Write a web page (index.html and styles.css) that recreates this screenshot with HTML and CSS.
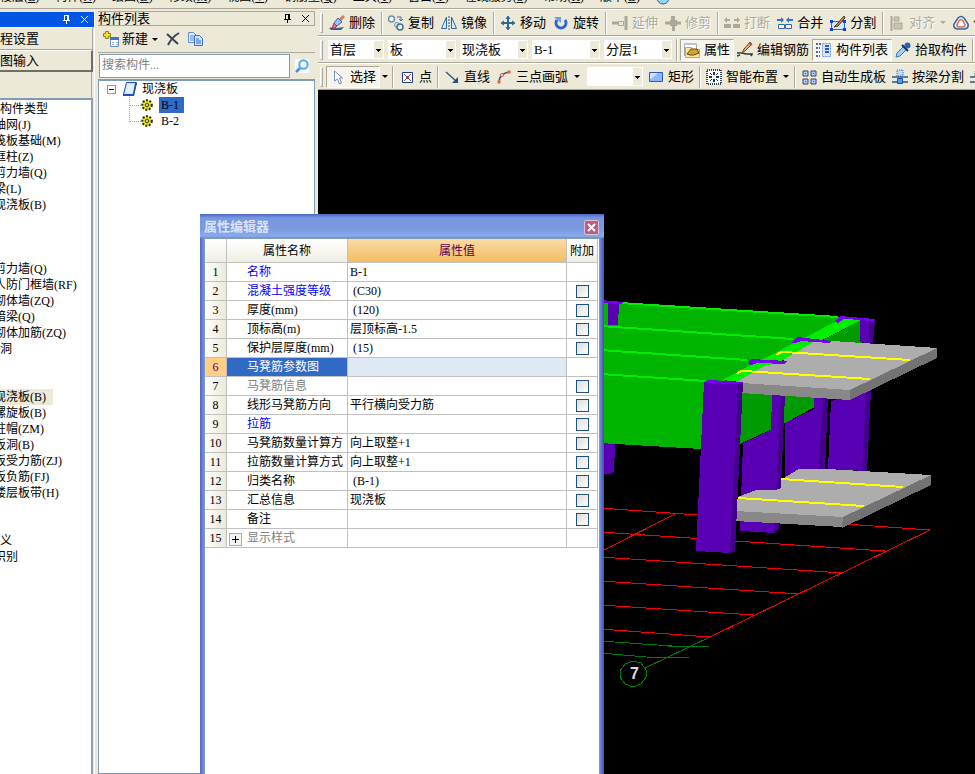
FILE: index.html
```html
<!DOCTYPE html>
<html lang="zh-CN">
<head>
<meta charset="utf-8">
<title>属性编辑器</title>
<link rel="stylesheet" href="styles.css">
</head>
<body>
<svg class="sprite" aria-hidden="true">
  <symbol id="pin" viewBox="0 0 9 9"><path d="M2.500 0v5M1 5.500h7M6 0v5M2 .5h5M4.500 5v4" fill="none" stroke="currentColor"/><path d="M5 0h2v5H5z" fill="currentColor"/></symbol>
  <symbol id="close" viewBox="0 0 9 9"><path d="M1 1l7 7M8 1L1 8" stroke="currentColor" fill="none"/></symbol>
  <symbol id="new" viewBox="0 0 16 16"><path d="M2.500.5h3v2h2v3h-2v2h-3v-2h-2v-3h2z" fill="#f3dc35" stroke="#957b12"/><path d="M7.500 6.500h8v9h-8z" fill="#fff" stroke="#6c8fc8"/><path d="M7 6h9v3H7z" fill="#3f74cd"/><path d="M9 11.500h2m2 0h2m-6 2h2m2 0h2" stroke="#8db0e8"/></symbol>
  <symbol id="x" viewBox="0 0 14 14"><path d="M1 2l11 10M13 1Q6 5 2 13" fill="none" stroke="#3c4250" stroke-width="2"/></symbol>
  <symbol id="copy" viewBox="0 0 16 14"><path d="M.5.5h5l3 3v7h-8z" fill="#dcebff" stroke="#5e8fdc"/><path d="M2 4h4M2 6h5M2 8h5" stroke="#5e8fdc"/><path d="M6.500 3.500h5l3 3v7h-8z" fill="#cfe2ff" stroke="#3b6fca"/><path d="M8 7h3M8 9h5M8 11h5" stroke="#3b6fca"/></symbol>
  <symbol id="find" viewBox="0 0 14 14"><path d="M0 0h14v14H0z" fill="#f6fbff"/><path d="M1 13l4-4" stroke="#4e95dc" stroke-width="3"/><circle cx="8.500" cy="5.500" r="4.200" fill="#e8f6ff" stroke="#5ba9e6" stroke-width="2"/></symbol>
  <symbol id="slab" viewBox="0 0 14 14"><path d="M3.500.5h10l-3 12H.5z" fill="#cfe2fb" stroke="#1c4ebc"/><path d="M4.500 2h7l-2 9h-7z" fill="#e4effd"/><path d="M12 1h2l-3 13H0v-2h10z" fill="#1c4ebc"/></symbol>
  <symbol id="gear" viewBox="0 0 12 12"><circle cx="6" cy="6" r="4.800" fill="#f6f000" stroke="#2c2900" stroke-width="2" stroke-dasharray="2 1.500"/><path d="M6 2v8M2 6h8M3 3l6 6M9 3L3 9" stroke="#8d8500" stroke-width=".6"/><circle cx="6" cy="6" r="1.500" fill="#fff" stroke="#333"/></symbol>
  <symbol id="erase" viewBox="0 0 16 16"><path d="M0 13l5-1 3 1 7-1-3 3H2z" fill="#2e5e96"/><path d="M15 1l-5 5" stroke="#c9824f" stroke-width="3"/><path d="M9 3l4 4-5 4-3-3z" fill="#9fc0f0" stroke="#3a5fae"/><path d="M5 8l3 3-2 2H3z" fill="#e56a84" stroke="#9c4862"/></symbol>
  <symbol id="dup" viewBox="0 0 16 16"><circle cx="3.500" cy="4" r="3" fill="#eef4fa" stroke="#6d8fae" stroke-width="1.500"/><path d="M9 2h4v3m-2-1l2 2 2-2" fill="none" stroke="#42719b"/><circle cx="9" cy="10" r="2.500" fill="none" stroke="#6d8fae"/><circle cx="12" cy="12" r="3" fill="#fff" fill-opacity=".6" stroke="#42719b" stroke-width="1.500"/></symbol>
  <symbol id="mirror" viewBox="0 0 16 16"><path d="M5.500 2v11.500H.5zM10.500 2v11.500h5z" fill="#d9ecf8" stroke="#2c68a0"/><path d="M8 1v14" stroke="#22538a" stroke-dasharray="2 1"/></symbol>
  <symbol id="move" viewBox="0 0 16 16"><path d="M8 2v12M2 8h12" stroke="#2f6799" stroke-width="2"/><path d="M6 4l2-3 2 3M6 12l2 3 2-3M4 6L1 8l3 2M12 6l3 2-3 2" fill="#2f6799" stroke="#2f6799"/></symbol>
  <symbol id="rotate" viewBox="0 0 16 16"><path d="M4 5a5 5 0 1 0 8 0" fill="none" stroke="#3067c9" stroke-width="3"/><path d="M1 2h7v6z" fill="#62a0ee"/></symbol>
  <symbol id="extend" viewBox="0 0 16 16"><path d="M0 8h6M14 1v14" stroke="#aca899" stroke-width="3"/><path d="M6.500 6.500h5v4h-5z" fill="none" stroke="#aca899"/></symbol>
  <symbol id="trim" viewBox="0 0 16 16"><path d="M0 8h16" stroke="#aca899" stroke-width="3"/><path d="M6 1h4v4h2v6h-2v5H7v-5H5V5h1z" fill="#aca899"/></symbol>
  <symbol id="break" viewBox="0 0 16 16"><path d="M0 9h7v4H0zM9 9h7v4H9z" fill="#aca899"/><path d="M1 5h5M10 5h5" stroke="#aca899" stroke-width="2"/><path d="M3 2v6L0 5zM13 2v6l3-3z" fill="#aca899"/></symbol>
  <symbol id="merge" viewBox="0 0 16 16"><path d="M1.500 9.500h6v4h-6zm7 0h6v4h-6z" fill="#eef5ff" stroke="#3d689f"/><path d="M0 5h5M16 5h-5" stroke="#3074c8" stroke-width="2"/><path d="M4 2l3 3-3 3zM12 2L9 5l3 3z" fill="#3074c8"/></symbol>
  <symbol id="split" viewBox="0 0 16 16"><path d="M1.500 6.500h13v8h-13z" fill="#cde9ff" stroke="#1a6fe0"/><path d="M0 5h3v3H0zM13 5h3v3h-3zM0 13h3v3H0zM13 13h3v3h-3z" fill="#1a3fe0"/><path d="M4 12l3-3 7-8 1 2-7 8z" fill="#d98b37" stroke="#553314"/></symbol>
  <symbol id="align" viewBox="0 0 16 16"><path d="M2.500 1v15" stroke="#aca899" stroke-width="2"/><path d="M5 2h5v4H5zM5 8h8v6H5z" fill="#c9c5b5" stroke="#aca899"/></symbol>
  <symbol id="offset" viewBox="0 0 16 16"><path d="M5 3Q8 0 11 3l4 6q1 4-3 5H4q-4-1-3-5z" fill="#eef" stroke="#31659b" stroke-width="1.500"/><path d="M6 6q2-3 4 0l2 4q0 2-2 2H6q-2 0-2-2z" fill="#fff" stroke="#df6a54" stroke-width="1.500"/></symbol>
  <symbol id="props" viewBox="0 0 16 16"><path d="M.5 1.500h12v12H.5z" fill="#fff" stroke="#9aa6b7"/><path d="M0 1h13v2H0z" fill="#b8c5d8"/><path d="M1.500 5.500h6l1 2h7v8h-14z" fill="#ffe397" stroke="#f09a2b"/><path d="M3 12l4-5h6l2 4-5 2H6z" fill="#d2a636" stroke="#6c4713"/></symbol>
  <symbol id="bar" viewBox="0 0 16 16"><path d="M0 11h5l4 1h7M3 13l-3 1M13 12l2 2" fill="none" stroke="#2d3d46" stroke-width="1.500"/><path d="M5 11l2-4 6-7 2 2-7 7z" fill="#deb076" stroke="#65482d"/><path d="M12 1l3 2" stroke="#d34f43" stroke-width="2"/></symbol>
  <symbol id="list" viewBox="0 0 16 16"><path d="M0 2h5M0 6h4M0 10h4M0 14h4" stroke="#52698c" stroke-width="2" stroke-dasharray="2 1"/><path d="M6.500 1.500h8v13h-8z" fill="#d6e6ff" stroke="#6b92da" stroke-dasharray="2 1"/><path d="M9 4h4M9 7h4M9 10h4" stroke="#255ac0" stroke-width="2"/></symbol>
  <symbol id="pick" viewBox="0 0 16 16"><path d="M1 15l1-4 7-7 3 3-7 7z" fill="#9fd0f5" stroke="#2877bb"/><path d="M7 3l6 6" stroke="#132e62" stroke-width="2"/><circle cx="12.500" cy="3.500" r="3" fill="#2f5fae"/></symbol>
  <symbol id="cursor" viewBox="0 0 16 16"><path d="M4.500 2v10l3-2 2 5 2-1-2-5h3z" fill="#fff" stroke="#6e8fb6"/></symbol>
  <symbol id="point" viewBox="0 0 16 16"><path d="M3.500 3.500h10v10h-10z" fill="#fff" stroke="#243c79"/><path d="M5 5l7 7M12 5l-7 7" stroke="#4063a8"/><circle cx="8.500" cy="8.500" r="1.500" fill="#e22"/></symbol>
  <symbol id="line" viewBox="0 0 16 16"><path d="M2 3l10 9" stroke="#2e5b93" stroke-width="1.500"/><path d="M14 8v6H8z" fill="#244e87"/></symbol>
  <symbol id="arc" viewBox="0 0 16 16"><path d="M3 14Q3 4 14 3" fill="none" stroke="#345678" stroke-width="1.500"/><circle cx="3" cy="13" r="1.800" fill="#e4684a"/><circle cx="6" cy="6" r="1.500" fill="#fff" stroke="#d94d31"/><circle cx="13" cy="3" r="1.800" fill="#e4684a"/></symbol>
  <symbol id="rect" viewBox="0 0 16 16"><path d="M1.500 3.500h13v9h-13z" fill="#8db7ff" stroke="#2b59b9"/><path d="M2 4h8l-7 6H2z" fill="#cfe1ff"/></symbol>
  <symbol id="smart" viewBox="0 0 16 16"><path d="M1 1h14v14H1z" fill="#fff" stroke="#35445f" stroke-width="2" stroke-dasharray="1 1"/><path d="M8 3v3M8 10v3M3 8h3M10 8h3" stroke="#17305f" stroke-width="2"/><path d="M4 4l2 2M12 4l-2 2M4 12l2-2M12 12l-2-2" stroke="#17305f"/></symbol>
  <symbol id="auto" viewBox="0 0 16 16"><path d="M2 2h5v5H2zM10 2h5v5h-5zM2 10h5v5H2zM10 10h5v5h-5z" fill="#aecbff" stroke="#39465c"/><path d="M4 4h1v1H4zM12 4h1v1h-1zM4 12h1v1H4zM12 12h1v1h-1z" fill="#2b5fc4"/></symbol>
  <symbol id="beam" viewBox="0 0 16 16"><path d="M0 8h16M0 13h16" stroke="#2b5691" stroke-width="1.500"/><path d="M5.500 9.500h5v5h-5z" fill="#4c9cf0" stroke="#1b4f9b"/><path d="M5 1h6v6H5z" fill="#b9dcff" stroke="#2f6bb1" stroke-dasharray="1 1"/></symbol>
  <symbol id="globe" viewBox="0 0 14 14"><circle cx="7" cy="7" r="6" fill="#9bd1f3" stroke="#25619d"/><path d="M2 5q6 6 10-1" fill="none" stroke="#1c4d82" stroke-width="2"/></symbol>
</svg>

<nav class="menu">
  <span>楼层(<u>L</u>)</span><span>构件(<u>N</u>)</span><span>绘图(<u>D</u>)</span><span>修改(<u>M</u>)</span><span>视图(<u>V</u>)</span><span>钢筋量(<u>Q</u>)</span><span>工具(<u>T</u>)</span><span>窗口(<u>Y</u>)</span><span>在线服务(<u>S</u>)</span><span>帮助(<u>H</u>)</span><span>版本(<u>B</u>)</span>
  <svg class="menu-icon"><use href="#globe"/></svg>
</nav>

<div class="shell">
  <aside class="navigator">
    <header class="nav-head"><svg class="i9"><use href="#pin"/></svg><svg class="i9"><use href="#close"/></svg></header>
    <button class="nav-btn">程设置</button>
    <button class="nav-btn sunk">图输入</button>
    <div class="nav-tools"></div>
    <div class="nav-tree">
      <ul>
        <li class="top">构件类型</li>
        <li>轴网(J)</li><li>筏板基础(M)</li><li>框柱(Z)</li><li>剪力墙(Q)</li><li>梁(L)</li><li>现浇板(B)</li>
      </ul>
      <ul class="group-wall">
        <li>剪力墙(Q)</li><li>人防门框墙(RF)</li><li>砌体墙(ZQ)</li><li>暗梁(Q)</li><li>砌体加筋(ZQ)</li><li class="top">洞</li>
      </ul>
      <ul class="group-slab">
        <li><span class="current">现浇板(B)</span></li><li>螺旋板(B)</li><li>柱帽(ZM)</li><li>板洞(B)</li><li>板受力筋(ZJ)</li><li>板负筋(FJ)</li><li>楼层板带(H)</li>
      </ul>
      <ul class="group-slab">
        <li class="top">义</li><li>识别</li>
      </ul>
    </div>
  </aside>

  <aside class="components">
    <header class="comp-head"><h2>构件列表</h2><svg class="i9"><use href="#pin"/></svg><svg class="i9"><use href="#close"/></svg></header>
    <div class="comp-tools">
      <button><svg class="i16"><use href="#new"/></svg>新建<i class="arrow"></i></button>
      <button aria-label="删除"><svg class="i14"><use href="#x"/></svg></button>
      <button aria-label="复制"><svg class="i16"><use href="#copy"/></svg></button>
    </div>
    <div class="search">
      <input type="text" placeholder="搜索构件..." aria-label="搜索构件">
      <button aria-label="搜索"><svg class="i14"><use href="#find"/></svg></button>
    </div>
    <div class="comp-tree">
      <div class="root"><i class="minus"></i><svg class="i14"><use href="#slab"/></svg>现浇板</div>
      <ul>
        <li><svg class="i12"><use href="#gear"/></svg><span class="picked">B-1</span></li>
        <li><svg class="i12"><use href="#gear"/></svg><span>B-2</span></li>
      </ul>
    </div>
  </aside>

  <main>
    <div class="bar edit">
      <i class="grip"></i>
      <button class="t"><svg><use href="#erase"/></svg>删除</button><i class="sep"></i>
      <button class="t"><svg><use href="#dup"/></svg>复制</button>
      <button class="t"><svg><use href="#mirror"/></svg>镜像</button><i class="sep"></i>
      <button class="t"><svg><use href="#move"/></svg>移动</button>
      <button class="t"><svg><use href="#rotate"/></svg>旋转</button><i class="sep"></i>
      <button class="t" disabled><svg><use href="#extend"/></svg>延伸</button>
      <button class="t" disabled><svg><use href="#trim"/></svg>修剪</button><i class="sep"></i>
      <button class="t" disabled><svg><use href="#break"/></svg>打断</button>
      <button class="t"><svg><use href="#merge"/></svg>合并</button>
      <button class="t"><svg><use href="#split"/></svg>分割</button><i class="sep"></i>
      <button class="t" disabled><svg><use href="#align"/></svg>对齐<i class="arrow"></i></button>
      <button class="t"><svg><use href="#offset"/></svg>偏移</button>
    </div>
    <div class="bar">
      <i class="grip"></i>
      <select class="short" aria-label="楼层"><option>首层</option></select>
      <select aria-label="构件类别"><option>板</option></select>
      <select aria-label="构件类型"><option>现浇板</option></select>
      <select aria-label="构件"><option>B-1</option></select>
      <select aria-label="分层"><option>分层1</option></select><i class="sep"></i>
      <button class="t on"><svg><use href="#props"/></svg>属性</button>
      <button class="t"><svg><use href="#bar"/></svg>编辑钢筋</button>
      <button class="t on"><svg><use href="#list"/></svg>构件列表</button>
      <button class="t"><svg><use href="#pick"/></svg>拾取构件</button><i class="sep"></i>
    </div>
    <div class="bar">
      <i class="grip"></i>
      <button class="t on"><svg><use href="#cursor"/></svg>选择</button><button class="drop" aria-label="选择方式"><i class="arrow"></i></button><i class="sep"></i>
      <button class="t"><svg><use href="#point"/></svg>点</button><i class="sep"></i>
      <button class="t"><svg><use href="#line"/></svg>直线</button>
      <button class="t arc"><svg><use href="#arc"/></svg>三点画弧<i class="arrow"></i></button>
      <select class="short" aria-label="画弧方式"><option></option></select>
      <button class="t"><svg><use href="#rect"/></svg>矩形</button><i class="sep"></i>
      <button class="t"><svg><use href="#smart"/></svg>智能布置<i class="arrow"></i></button><i class="sep"></i>
      <button class="t"><svg><use href="#auto"/></svg>自动生成板</button>
      <button class="t"><svg><use href="#beam"/></svg>按梁分割</button>
      <button class="t" aria-label="查看"><svg><use href="#beam"/></svg></button>
    </div>

    <svg class="scene" viewBox="318 90 657 684" preserveAspectRatio="xMinYMin slice" shape-rendering="crispEdges">
      <g stroke="#f00" fill="none">
        <path d="M600 508l98 7M845 524l85 6M600 532l285 19M600 557l243 16M600 581l200 13M600 605l154 10M600 629l110 8M930 530L710 637M677 513l-77 39"/>
      </g>
      <path d="M600 641l86 6M668 647l42-1M600 653l46 4 43 1M710 637l-65 31" stroke="#008000" fill="none"/>
      <path d="M600 443l15 1-1 28-5 2h-9z" fill="#5a00b4"/>
      <path d="M600 302h20l218 15 27 3-143 62-21 67-101-6z" fill="#00b400"/>
      <path d="M742 382l120-62v22l-34 58-43 23-45 21z" fill="#009b00"/>
      <path d="M620 303l218 14M600 326l193 13M600 350l147 10M600 374l105 7" stroke="#00ee00" stroke-width="2"/>
      <path d="M722 380l121-62 18 2-121 62z" fill="#00ee00"/>
      <path d="M608 303h11l-1 22h-10z" fill="#5a00b4"/><path d="M600 300l24 2-3 2-21-1z" fill="#7800f0"/>
      <path d="M860 320l15-1-2 25-13-2z" fill="#5a00b4"/><path d="M869 321l6-1-2 24h-4z" fill="#44008c"/>
      <path d="M831 401l40-12-4 82-39-2z" fill="#5a00b4"/><path d="M866 391h5l-4 80h-5z" fill="#44008c"/>
      <path d="M785 423l29-14v-12h14l-3 73-40 10z" fill="#5a00b4"/><path d="M823 397h5l-3 71-6 1z" fill="#44008c"/>
      <path d="M743 443l28-13 1-35h13l-4 84-2 50-5 4-34-2z" fill="#5a00b4"/><path d="M781 395h4l-4 92-2 42-5 4z" fill="#44008c"/>
      <path d="M835 322l5-6 35 3-1 3-12-2-18-1-6 4zM791 343l7-6 33 4-2 2-28-2-5 2zM748 364l3-5 36 2-2 3-27-1-7 2z" fill="#7800f0"/>
      <path d="M738 381l28-16 21-2-4-3 32-19h17l105 7-87 42-109-7z" fill="#adadad"/>
      <path d="M748 364l3-5 36 2-2 3-27-1-7 2zM791 343l7-6 33 4-2 2-28-2-5 2z" fill="#7800f0"/>
      <path d="M741 383l109 7v10l-109-7z" fill="#888"/><path d="M850 390l87-42v10l-87 42z" fill="#737373"/>
      <path d="M784 478l15-9h28l104 6-88 42-108-6 3-14 18-7h20l5-2v-10z" fill="#adadad"/>
      <path d="M735 511l108 6-1 10-107-6z" fill="#888"/><path d="M843 517l88-42v10l-89 43z" fill="#737373"/>
      <path d="M777 355q2-3 7-3l126 8M737 374q2-3 7-3l126 8M781 479l122 8M738 498l126 8" stroke="#ff0" stroke-width="2" fill="none"/>
      <path d="M704 382l34 1-7 170-35-2z" fill="#5a00b4"/><path d="M738 382h5l-8 169-5 2z" fill="#44008c"/><path d="M704 383l5-3 34 2-5 2z" fill="#7800f0"/>
      <path d="M633 661l8 2 5 7v7l-5 7-8 3-8-3-5-7v-6l5-7z" fill="none" stroke="#008000"/>
      <text x="630" y="679" class="axis">7</text>
    </svg>
  </main>
</div>

<section class="dialog">
  <header><h1>属性编辑器</h1><button aria-label="关闭"><svg class="i9"><use href="#close"/></svg></button></header>
  <div class="dialog-body">
    <table>
      <colgroup><col class="c-no"><col class="c-name"><col class="c-value"><col class="c-add"></colgroup>
      <thead><tr><th></th><th>属性名称</th><th class="hot">属性值</th><th>附加</th></tr></thead>
      <tbody>
        <tr><th>1</th><td class="key">名称</td><td>B-1</td><td></td></tr>
        <tr><th>2</th><td class="key">混凝土强度等级</td><td class="auto">(C30)</td><td><input type="checkbox" aria-label="混凝土强度等级"></td></tr>
        <tr><th>3</th><td>厚度(mm)</td><td class="auto">(120)</td><td><input type="checkbox" aria-label="厚度"></td></tr>
        <tr><th>4</th><td>顶标高(m)</td><td>层顶标高-1.5</td><td><input type="checkbox" aria-label="顶标高"></td></tr>
        <tr><th>5</th><td>保护层厚度(mm)</td><td class="auto">(15)</td><td><input type="checkbox" aria-label="保护层厚度"></td></tr>
        <tr class="active"><th>6</th><td>马凳筋参数图</td><td></td><td></td></tr>
        <tr><th>7</th><td class="dim">马凳筋信息</td><td></td><td><input type="checkbox" aria-label="马凳筋信息"></td></tr>
        <tr><th>8</th><td>线形马凳筋方向</td><td>平行横向受力筋</td><td><input type="checkbox" aria-label="线形马凳筋方向"></td></tr>
        <tr><th>9</th><td class="key">拉筋</td><td></td><td><input type="checkbox" aria-label="拉筋"></td></tr>
        <tr><th>10</th><td>马凳筋数量计算方</td><td>向上取整+1</td><td><input type="checkbox" aria-label="马凳筋数量计算方"></td></tr>
        <tr><th>11</th><td>拉筋数量计算方式</td><td>向上取整+1</td><td><input type="checkbox" aria-label="拉筋数量计算方式"></td></tr>
        <tr><th>12</th><td>归类名称</td><td class="auto">(B-1)</td><td><input type="checkbox" aria-label="归类名称"></td></tr>
        <tr><th>13</th><td>汇总信息</td><td>现浇板</td><td><input type="checkbox" aria-label="汇总信息"></td></tr>
        <tr><th>14</th><td>备注</td><td></td><td><input type="checkbox" aria-label="备注"></td></tr>
        <tr><th>15</th><td class="dim fold"><button aria-label="展开"></button>显示样式</td><td></td><td></td></tr>
      </tbody>
    </table>
  </div>
</section>
</body>
</html>
```
FILE: styles.css
```css
* { box-sizing: border-box; }
body {
  margin: 0; height: 100vh; overflow: hidden; position: relative;
  display: flex; flex-direction: column;
  background: #ece9d8; color: #000;
  font: 12px/16px "Liberation Serif", "Noto Sans CJK SC", serif;
}
button, input, select { font: inherit; color: inherit; margin: 0; padding: 0; border: 0; background: none; border-radius: 0; }
button { display: flex; align-items: center; white-space: nowrap; }
ul { list-style: none; margin: 0; padding: 0; }
h1, h2 { margin: 0; font-size: 13px; font-weight: normal; }
svg { flex: none; }
.sprite { display: none; }
.i9 { width: 9px; height: 9px; }
.i12 { width: 12px; height: 12px; }
.i14 { width: 14px; height: 14px; }
.i16 { width: 16px; height: 16px; }
.arrow { border: 3px solid transparent; border-top-color: #000; border-bottom: 0; flex: none; margin-left: 4px; }

.menu { flex: none; height: 9px; overflow: hidden; display: flex; align-items: flex-end; gap: 16px; padding-bottom: 3px; white-space: nowrap; border-bottom: 1px solid #aca899; }
.menu span { flex: none; }
.menu-icon { width: 14px; height: 14px; }

.shell { flex: 1; min-height: 0; display: flex; }

.navigator { flex: none; width: 94px; padding-top: 3px; display: flex; flex-direction: column; }
.nav-head { height: 15px; background: #0055e5; color: #fff; display: flex; align-items: center; justify-content: flex-end; gap: 9px; padding-right: 5px; }
.nav-btn { height: 23px; width: 93px; font-size: 13px; border: 1px solid #fff; border-left: 0; border-right-color: #aca899; border-bottom-color: #aca899; }
.nav-btn.sunk { height: 22px; border-right: 2px solid #716f64; border-bottom: 2px solid #716f64; }
.nav-tools { height: 26px; width: 92px; border-right: 1px solid #aca899; }
.nav-tree { flex: 1; width: 93px; overflow: hidden; background: #fff; border-top: 2px solid #7f9db9; border-right: 2px solid #8f9db9; padding-top: 1px; white-space: nowrap; }
.nav-tree li { height: 16px; margin-left: -6px; }
.nav-tree .top { margin-left: 0; }
.group-wall { margin-top: 48px; }
.group-slab { margin-top: 32px; }
.current { display: inline-block; background: #ece9d8; width: 59px; }

.components { flex: none; width: 224px; padding: 2px 3px 0 3px; display: flex; flex-direction: column; border-left: 1px solid #fff; }
.comp-head { height: 15px; border: 1px solid #aca899; border-left: 0; display: flex; align-items: center; gap: 9px; padding-right: 4px; line-height: 13px; }
.comp-head h2 { margin-right: auto; }
.comp-tools { height: 27px; display: flex; align-items: center; gap: 8px; padding-left: 5px; font-size: 13px; border-bottom: 1px solid #aca899; }
.comp-tools .i16 { margin-right: 3px; }
.search { height: 26px; display: flex; justify-content: space-between; padding: 1px 4px 1px 1px; }
.search input { width: 191px; background: #fff; border: 1px solid #7f9db9; padding: 0 2px 3px; }
.search input::placeholder { color: #808080; }
.search button { padding: 0 2px; }
.comp-tree { flex: 1; background: #fff; border: 1px solid #7f9db9; border-top-width: 2px; padding: 0 0 0 8px; }
.root { display: flex; align-items: center; height: 16px; }
.root svg { margin: 0 5px 0 7px; }
.minus { width: 9px; height: 9px; border: 1px solid #7f9db9; background: linear-gradient(#000, #000) center / 5px 1px no-repeat; }
.comp-tree ul { margin-left: 22px; }
.comp-tree li { height: 16px; display: flex; align-items: center; background: repeating-linear-gradient(#aca899 0 1px, #fff 1px 2px) left top / 1px 16px no-repeat; }
.comp-tree li:last-child { background-size: 1px 8px; }
.comp-tree li::before { content: ""; width: 12px; border-top: 1px dotted #aca899; }
.comp-tree li svg { margin-right: 6px; }
.comp-tree li span { padding: 0 5px 0 2px; }
.comp-tree .picked { background: #316ac5; }

main { flex: 1; min-width: 0; display: flex; flex-direction: column; }
.bar { flex: none; height: 27px; display: flex; align-items: center; overflow: hidden; font-size: 13px; border-bottom: 1px solid #aca899; border-top: 1px solid #fff; }
.grip { flex: none; width: 3px; height: 20px; margin: 0 3px 0 2px; border: 1px solid #fff; border-right-color: #aca899; border-bottom-color: #aca899; }
.sep { flex: none; width: 2px; height: 22px; margin: 0 2px; border-left: 1px solid #aca899; border-right: 1px solid #fff; }
.t { flex: none; height: 22px; padding: 0 3px; gap: 4px; }
.edit .t { padding-right: 4px; }
.t svg { width: 16px; height: 16px; }
.t .arrow { margin-left: 1px; }
.t:disabled { color: #aca899; text-shadow: 1px 1px 0 #fff; }
.t:disabled .arrow { border-top-color: #aca899; }
.on { background: #f6f4ec; border: 1px solid #aca899; border-right-color: #fff; border-bottom-color: #fff; }
.arc .arrow { margin: 0 2px; }
.drop { flex: none; height: 22px; }
.drop .arrow { margin: 0 2px; }
select {
  appearance: none; flex: none; width: 68px; height: 19px; margin: 0 2px; padding: 0 12px 0 2px;
  background-color: #fff;
  background-image: linear-gradient(#000, #000), linear-gradient(#000, #000), linear-gradient(#000, #000), linear-gradient(#ece9d8, #ece9d8);
  background-position: right 3px top 9px, right 4px top 10px, right 5px top 11px, right 1px center;
  background-size: 5px 1px, 3px 1px, 1px 1px, 9px 17px;
  background-repeat: no-repeat;
}
select.short { width: 56px; }
.scene { flex: 1; width: 100%; min-height: 0; background: #000; display: block; }
.axis { font: bold 16px "Liberation Sans", sans-serif; fill: #ddd; }

.dialog { position: absolute; left: 200px; top: 214px; bottom: 0; width: 404px; display: flex; flex-direction: column; background: linear-gradient(90deg, #5563c4, #7088dc 3px, #7088dc 400px, #4450a8); }
.dialog header { height: 24px; display: flex; align-items: center; justify-content: space-between; padding: 2px 5px 0 4px; background: linear-gradient(#4a66c0, #7a98e2 4px, #7a98e0 14px, #88abeb 22px, #7088dc); }
.dialog h1 { font-weight: bold; color: #d8e2f8; }
.dialog header button { width: 15px; height: 15px; justify-content: center; color: #fff; background: #b7617c; border: 1px solid #dfc0d4; border-radius: 2px; }
.dialog header path, .dialog header svg { stroke-width: 2; }
.dialog-body { flex: 1; min-height: 0; margin: 0 4px; background: #fff; border: 1px solid #7f9db9; border-width: 1px 1px 0; }
table { width: 393px; table-layout: fixed; border-collapse: separate; border-spacing: 0; line-height: 16px; }
.c-no { width: 22px; }
.c-name { width: 121px; }
.c-value { width: 219px; }
.c-add { width: 31px; }
th, td { height: 19px; padding: 0 0 0 2px; border: 0 solid #c0c0c0; border-width: 0 1px 1px 0; text-align: left; font-weight: normal; white-space: nowrap; overflow: hidden; }
th { padding: 0; text-align: center; background: linear-gradient(90deg, #fff, #ece9d8); }
thead th { height: 24px; background: linear-gradient(#fff, #f0eee2); }
thead .hot { background: linear-gradient(#fbdba5, #f1bd62); color: #5a0050; }
td:nth-child(2) { padding-left: 20px; }
td:nth-child(4) { padding: 0; text-align: center; }
.key { color: #00f; }
.dim { color: #808080; }
.auto { padding-left: 5px; }
.active th { background: #ffcf87; color: #5a0050; }
.active td:nth-child(2) { background: #316ac5; color: #fff; }
.active td:nth-child(3) { background: #dfe8f5; }
input[type="checkbox"] { appearance: none; display: block; width: 13px; height: 13px; margin: 0 auto; border: 1px solid #1c5180; background: linear-gradient(135deg, #dcdcd7, #fff); }
td.fold { padding-left: 2px; }
.fold button { display: inline-block; vertical-align: middle; width: 13px; height: 13px; margin-right: 5px; border: 1px solid #aaa; background: linear-gradient(#000, #000) center / 7px 1px no-repeat, linear-gradient(#000, #000) center / 1px 7px no-repeat, #f4f4f0; }
```
